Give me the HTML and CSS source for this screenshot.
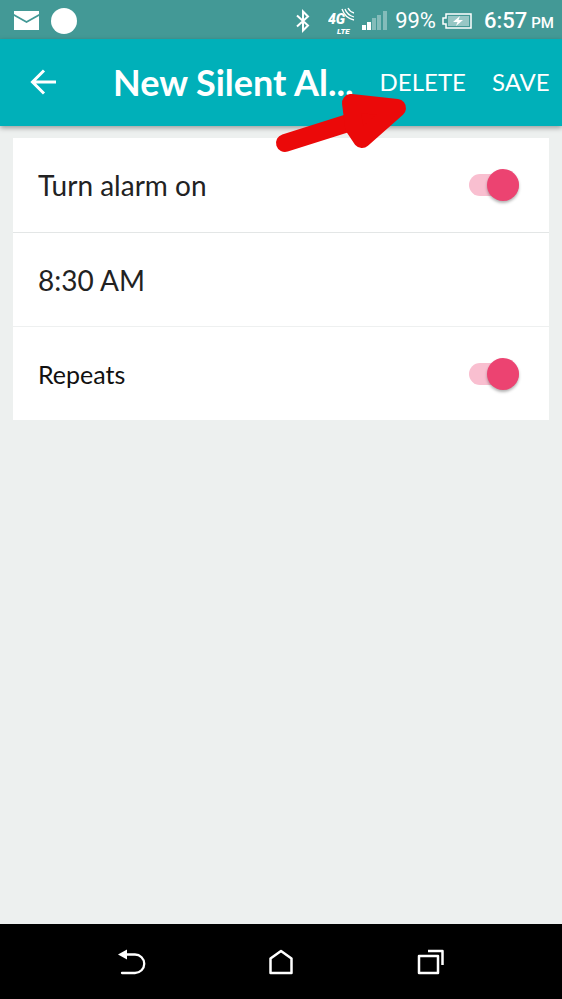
FILE: index.html
```html
<!DOCTYPE html>
<html lang="en">
<head>
<meta charset="utf-8">
<meta name="viewport" content="width=device-width, initial-scale=1">
<title>New Silent Alarm</title>
<link rel="stylesheet" href="styles.css">
</head>
<body>
<div class="status-bar">
  <div class="notifications">
    <svg width="25" height="19" viewBox="0 0 25 19" aria-hidden="true">
      <path d="M0 0H25V3L12.500 10L0 3Z" fill="#fff"/>
      <path d="M0 5L12.500 12L25 5V19H0Z" fill="#fff"/>
    </svg>
    <span class="dot"></span>
  </div>
  <svg class="bluetooth" width="14" height="24" viewBox="0 0 14 24" fill="none" stroke="#fff" stroke-width="2" aria-hidden="true">
    <path d="M1 6.500L12 16.500L7 21.500V2.500L12 7.500L1 17.500"/>
  </svg>
  <svg class="network" width="28" height="28" viewBox="0 0 28 28" aria-hidden="true">
    <text class="network-gen" x="0" y="17">4G</text>
    <text class="network-lte" x="9" y="27">LTE</text>
    <g fill="none" stroke="#fff" stroke-width="1.300">
      <path d="M14 2Q17 11 26 13"/>
      <path d="M17 2Q19 8 26 10"/>
      <path d="M20 1Q22 5 26 6"/>
    </g>
  </svg>
  <svg class="signal" width="25" height="19" viewBox="0 0 25 19" fill="#fff" aria-hidden="true">
    <path d="M0 14H4V19H0ZM5 11H9V19H5Z"/>
    <path d="M10 7H14V19H10ZM15 4H19V19H15ZM21 0H25V19H21Z" opacity=".35"/>
  </svg>
  <span class="battery-level">99%</span>
  <svg class="battery" width="30" height="16" viewBox="0 0 30 16" aria-hidden="true">
    <path d="M4 1H29V15H4V11H1V5H4Z" fill="none" stroke="#fff" stroke-width="1.500"/>
    <path d="M6 3H27V13H6Z" fill="#fff" opacity=".45"/>
    <path d="M18 3L11 9H15.500L14 13L21 7H16.500Z" fill="#fff"/>
  </svg>
  <span class="clock">6:57 <span class="meridiem">PM</span></span>
</div>

<header class="app-bar">
  <button class="back" type="button" aria-label="Back">
    <svg width="27" height="26" viewBox="0 0 27 26" fill="none" stroke="#fff" stroke-width="3" aria-hidden="true">
      <path d="M26 13H3M14 1.500L2.500 13L14 24.500"/>
    </svg>
  </button>
  <h1 class="title">New Silent Al...</h1>
  <button class="action" type="button">DELETE</button>
  <button class="action" type="button">SAVE</button>
  <svg class="pointer" width="131" height="62" viewBox="0 0 131 62" aria-hidden="true">
    <path d="M9 50L88 25" fill="none" stroke="#eb0909" stroke-width="18" stroke-linecap="round"/>
    <path d="M75 10L121 15L86 46L78 34Z" fill="#eb0909" stroke="#eb0909" stroke-width="18" stroke-linejoin="round"/>
  </svg>
</header>

<main class="content">
  <form class="card">
    <div class="row">
      <label for="alarm-on">Turn alarm on</label>
      <input class="switch" id="alarm-on" type="checkbox" role="switch" checked>
    </div>
    <button class="row time" type="button">8:30 AM</button>
    <div class="row repeats">
      <label for="repeats">Repeats</label>
      <input class="switch" id="repeats" type="checkbox" role="switch" checked>
    </div>
  </form>
</main>

<nav class="nav-bar">
  <button type="button" aria-label="Back">
    <svg width="28" height="26" viewBox="0 0 28 26" aria-hidden="true">
      <path d="M8 5.500H17A9 9 0 0 1 17 24H4" fill="none" stroke="#fff" stroke-width="2.300" stroke-linecap="round"/>
      <path d="M0 5.500L9 0.500V10.500Z" fill="#fff"/>
    </svg>
  </button>
  <button type="button" aria-label="Home">
    <svg width="24" height="26" viewBox="0 0 24 26" fill="none" stroke="#fff" stroke-width="2.500" stroke-linejoin="round" aria-hidden="true">
      <path d="M1.500 9.500L12 2L22.500 9.500V24H1.500Z"/>
    </svg>
  </button>
  <button type="button" aria-label="Recent apps">
    <svg width="28" height="26" viewBox="0 0 28 26" fill="none" stroke="#fff" stroke-width="2.500" stroke-linejoin="round" aria-hidden="true">
      <path d="M3 7H22V24H3Z"/>
      <path d="M12 2H26.500V16"/>
    </svg>
  </button>
</nav>
</body>
</html>
```
FILE: styles.css
```css
* {
  box-sizing: border-box;
}

body {
  margin: 0;
  min-height: 100vh;
  display: flex;
  flex-direction: column;
  background: #edf0ef;
  font-family: Lato, "Liberation Sans", sans-serif;
  color: #222;
}

button {
  margin: 0;
  padding: 0;
  border: 0;
  background: none;
  font: inherit;
  color: inherit;
  cursor: pointer;
}

svg {
  display: block;
  flex: none;
}

.status-bar {
  display: flex;
  align-items: center;
  height: 39px;
  padding: 2px 8px 0 14px;
  background: #439996;
  color: #fff;
  font-family: Roboto, sans-serif;
  font-size: 22px;
  white-space: nowrap;
}

.notifications {
  display: flex;
  align-items: center;
  gap: 12px;
  margin-right: auto;
}

.dot {
  width: 26px;
  height: 26px;
  border-radius: 50%;
  background: #fff;
}

.network {
  margin-left: 18px;
}

.network-gen,
.network-lte {
  fill: #fff;
  font-family: Roboto, sans-serif;
  font-style: italic;
  font-weight: 900;
}

.network-gen {
  font-size: 14px;
}

.network-lte {
  font-size: 8px;
}

.signal {
  margin: 0 8px 0 6px;
}

.battery {
  margin: 0 12px 0 6px;
}

.clock {
  display: flex;
  align-items: baseline;
  gap: 4px;
  font-weight: 500;
}

.meridiem {
  font-size: 15px;
}

.app-bar {
  position: relative;
  z-index: 1;
  display: flex;
  align-items: center;
  height: 87px;
  padding: 0 13px 2px 30px;
  background: #00b0b9;
  box-shadow: 0 2px 5px rgba(0, 0, 0, 0.35);
  color: #fff;
}

.title {
  flex: 1;
  margin: 0 0 0 56px;
  font-size: 36px;
  font-weight: 700;
  white-space: nowrap;
}

.action {
  margin-left: 26px;
  font-size: 24px;
}

.pointer {
  position: absolute;
  right: 155px;
  top: 54px;
  overflow: visible;
}

.content {
  flex: 1;
  padding: 12px 13px;
}

.card {
  background: #fff;
}

.row {
  display: flex;
  align-items: center;
  justify-content: space-between;
  width: 100%;
  height: 94px;
  padding: 0 30px 0 25px;
  font-size: 28px;
}

.row + .row {
  border-top: 1px solid #e3e6e6;
}

.row.repeats {
  border-top-color: #eef0f0;
  font-size: 25px;
  color: #111;
}

.switch {
  appearance: none;
  display: grid;
  align-items: center;
  width: 50px;
  height: 32px;
  margin: 0;
  cursor: pointer;
}

.switch::before,
.switch::after {
  content: "";
  grid-area: 1 / 1;
}

.switch::before {
  height: 22px;
  border-radius: 11px;
  background: #d0d0d0;
}

.switch::after {
  width: 32px;
  height: 32px;
  border-radius: 50%;
  background: #fafafa;
  box-shadow: 0 2px 3px rgba(0, 0, 0, 0.3);
}

.switch:checked::before {
  background: #f9bfd0;
}

.switch:checked::after {
  justify-self: end;
  background: #ec4371;
}

.nav-bar {
  display: flex;
  align-items: center;
  justify-content: center;
  gap: 123px;
  height: 75px;
  background: #000;
}
```
